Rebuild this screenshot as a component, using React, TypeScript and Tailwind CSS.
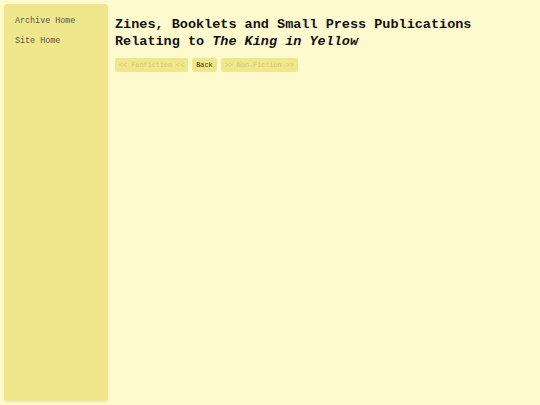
export default function App() {
    const mono = { fontFamily: '"Liberation Mono", "Courier New", monospace' };

    return (
        <div className="flex min-h-[405px] gap-[7px] bg-[#fffacd] p-[4px]" style={mono}>
            {/* Sidebar */}
            <nav className="flex w-[104px] h-[397px] shrink-0 flex-col gap-[8px] rounded-[3px] bg-[#f0e68c] px-[11px] pt-[11px] shadow-[0_1px_2px_rgba(0,0,0,0.08)]">
                <a className="text-[8.4px] leading-[12px] text-[#555]">Archive Home</a>
                <a className="text-[8.4px] leading-[12px] text-[#555]">Site Home</a>
            </nav>

            {/* Main */}
            <main className="flex flex-col pt-[12px]">
                <h1 className="text-[13.5px] font-bold leading-[17px] text-[#111]">
                    Zines, Booklets and Small Press Publications
                    <br />
                    Relating to <i>The King in Yellow</i>
                </h1>
                <div className="mt-[8px] flex gap-[4px]">
                    <span className="rounded-[2px] bg-[#f0e68c] px-[4px] text-[6.8px] leading-[14px] text-[#d4c670]">
                        &lt;&lt; Fanfiction &lt;&lt;
                    </span>
                    <span className="rounded-[2px] bg-[#f0e68c] px-[4px] text-[6.8px] leading-[14px] text-[#333]">
                        Back
                    </span>
                    <span className="rounded-[2px] bg-[#f0e68c] px-[4px] text-[6.8px] leading-[14px] text-[#d4c670]">
                        &gt;&gt; Non-Fiction &gt;&gt;
                    </span>
                </div>
            </main>
        </div>
    );
}
